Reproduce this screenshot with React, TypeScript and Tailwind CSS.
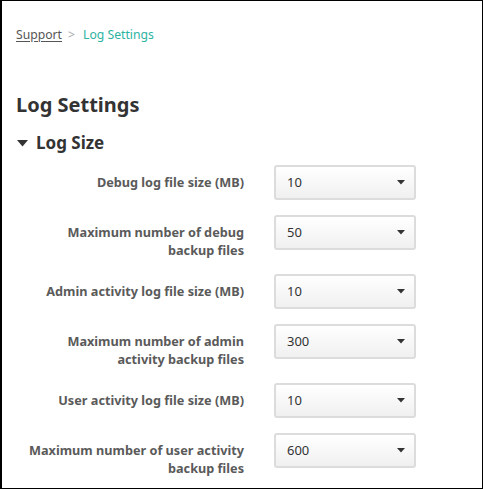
const rows = [
  { label: "Debug log file size (MB)", value: "10" },
  { label: ["Maximum number of debug", "backup files"], value: "50" },
  { label: "Admin activity log file size (MB)", value: "10" },
  { label: ["Maximum number of admin", "activity backup files"], value: "300" },
  { label: "User activity log file size (MB)", value: "10" },
  { label: ["Maximum number of user activity", "backup files"], value: "600" },
];

function Select({ value }: { value: string }) {
  return (
    <div className="flex h-[35px] w-[142px] shrink-0 items-center justify-between rounded-[3px] border-2 border-[#dcdcdc] bg-gradient-to-b from-white to-[#f0f0f0] pl-[11px] pr-[9px] text-[13px] text-[#333]">
      <span>{value}</span>
      <svg width="8" height="5" viewBox="0 0 8 5" className="mr-[0px]">
        <path d="M0 0h8L4 4.5z" fill="#333" />
      </svg>
    </div>
  );
}

export default function App() {
  return (
    <div
      className="h-[489px] w-[483px] overflow-hidden border border-l-2 border-black bg-white text-[#333]"
      style={{ fontFamily: '"Noto Sans", "Open Sans", sans-serif' }}
    >
      <div className="pl-[14px] pt-[25px]">
        {/* Breadcrumb */}
        <div className="flex items-center text-[12.2px] leading-[18px]">
          <a className="text-[#555] underline underline-offset-2">Support</a>
          <span className="ml-[6px] text-[#aaa]">&gt;</span>
          <span className="ml-[8px] text-[#2bb3a3]">Log Settings</span>
        </div>

        <h1 className="mt-[48px] text-[20px] font-bold leading-[26px] text-[#333]">Log Settings</h1>

        <div className="mt-[14px] flex items-center">
          <svg width="11" height="7" viewBox="0 0 11 7" className="ml-[1px] mr-[8px]">
            <path d="M0 0h11L5.5 6.5z" fill="#333" />
          </svg>
          <h2 className="text-[17px] font-bold leading-[22px]">Log Size</h2>
        </div>

        {/* Rows */}
        <div className="mt-[11px]">
          {rows.map((r, i) => (
            <div key={i} className="mb-[15px] flex items-start">
              <div className="w-[228px] pt-[8px] text-right text-[12.7px] font-bold leading-[18px] text-[#5a5a5a]">
                {Array.isArray(r.label) ? (
                  <>
                    {r.label[0]}
                    <br />
                    {r.label[1]}
                  </>
                ) : (
                  r.label
                )}
              </div>
              <div className="ml-[30px]">
                <Select value={r.value} />
              </div>
            </div>
          ))}
        </div>
      </div>
    </div>
  );
}
